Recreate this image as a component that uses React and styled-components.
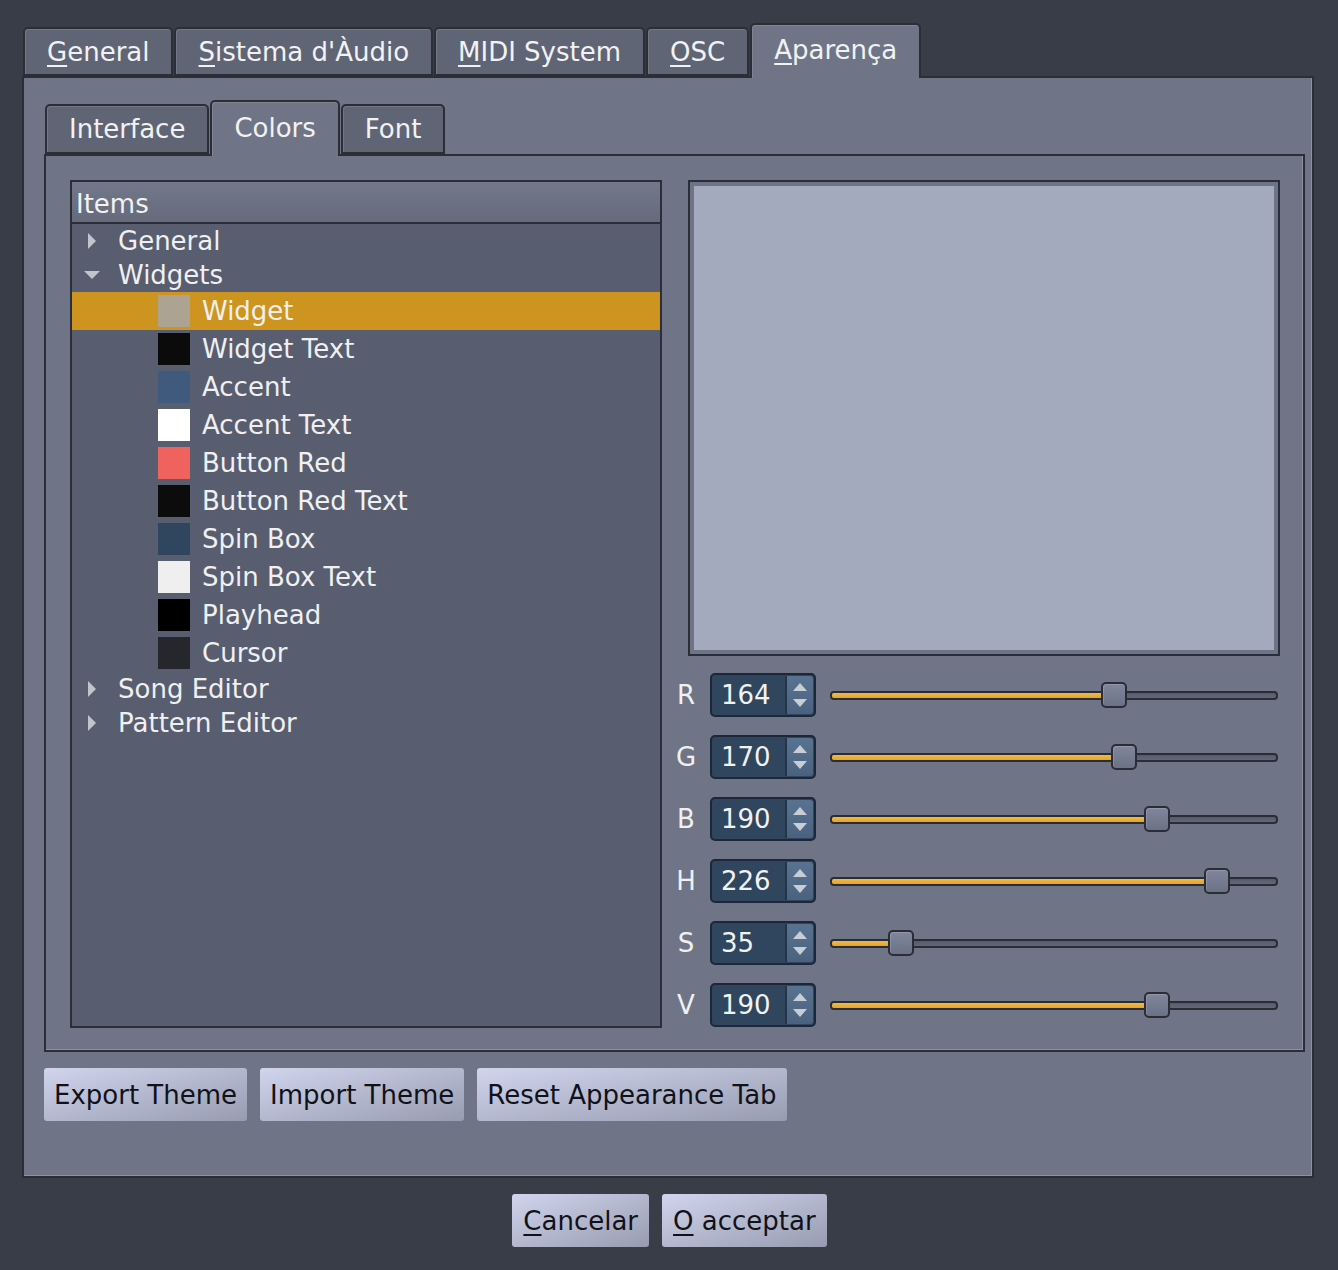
import React from 'react';
import styled, { createGlobalStyle } from 'styled-components';

const Global = createGlobalStyle`
  html, body { margin: 0; padding: 0; background: #393d48; }
  body {
    font-family: "DejaVu Sans", "Liberation Sans", sans-serif;
    font-size: 26px;
    color: #f0f0f0;
  }
  * { box-sizing: border-box; }
`;

const Dialog = styled.div`
  width: 1338px;
  height: 1270px;
  padding: 23px 24px 0 22px;
  display: flex;
  flex-direction: column;
`;

const TabBar = styled.div`
  display: flex;
  align-items: flex-end;
  gap: 1px;
  height: ${p => p.$h}px;
  padding-left: 1px;
  position: relative;
  z-index: 2;
  flex: none;
`;

const Tab = styled.div`
  height: ${p => p.$h}px;
  padding: 0 22px ${p => (p.$active ? 3 : 0)}px;
  display: flex;
  align-items: center;
  white-space: nowrap;
  color: #f2f2f2;
  background: ${p => (p.$active ? '#6f7586' : '#606576')};
  border: 2px solid #2b2e36;
  border-bottom: ${p => (p.$active ? 'none' : '2px solid #2b2e36')};
  border-radius: 5px 5px 0 0;
  margin-bottom: ${p => (p.$active ? -2 : 0)}px;
  box-shadow: inset 1px 1px 0 rgba(255, 255, 255, 0.12);
`;

const Mn = styled.span`
  text-decoration: underline;
  text-decoration-thickness: 2px;
  text-underline-offset: 4px;
`;

const Pane = styled.div`
  background: #6f7586;
  border: 2px solid #2b2e36;
  box-shadow: inset -1px -1px 0 #8c92a3;
  height: ${p => p.$h}px;
  padding: ${p => p.$pad};
  flex: none;
  display: flex;
  flex-direction: column;
`;

const ContentGrid = styled.div`
  display: grid;
  grid-template-columns: 592px 608px;
  column-gap: 10px;
  height: 100%;
`;

const Tree = styled.div`
  border: 2px solid #2b2e36;
  background: #585d70;
  display: flex;
  flex-direction: column;
  height: 848px;
`;

const TreeHeader = styled.div`
  height: 42px;
  flex: none;
  padding: 3px 0 0 4px;
  display: flex;
  align-items: center;
  background: linear-gradient(#727889, #656a7c);
  border-bottom: 2px solid #2b2e36;
  color: #f2f2f2;
`;

const Row = styled.div`
  height: ${p => (p.$child ? 38 : 34)}px;
  display: flex;
  align-items: center;
  padding-left: ${p => (p.$child ? 86 : 0)}px;
  background: ${p => (p.$selected ? '#cd951f' : 'transparent')};
  color: #f0f0f0;
  white-space: nowrap;
`;

const ArrowBox = styled.span`
  width: 40px;
  margin-right: 6px;
  display: flex;
  justify-content: center;
  align-items: center;
  flex: none;
`;

const Swatch = styled.span`
  width: 32px;
  height: 32px;
  flex: none;
  margin-right: 12px;
  background: ${p => p.$c};
`;

const RightCol = styled.div`
  display: flex;
  flex-direction: column;
`;

const Preview = styled.div`
  margin-left: 16px;
  height: 476px;
  border: 2px solid #2b2e36;
  padding: 4px;
  background: #6e7487;
  flex: none;
`;

const PreviewFill = styled.div`
  width: 100%;
  height: 100%;
  background: ${p => p.$c};
`;

const Sliders = styled.div`
  margin-top: 17px;
  display: flex;
  flex-direction: column;
  gap: 18px;
`;

const SliderRow = styled.div`
  height: 44px;
  display: flex;
  align-items: center;
`;

const ChanLabel = styled.span`
  width: 28px;
  text-align: center;
  color: #f0f0f0;
  flex: none;
`;

const Spin = styled.div`
  margin-left: 10px;
  width: 106px;
  height: 44px;
  flex: none;
  display: flex;
  background: #30455e;
  border: 2px solid #1d2737;
  border-radius: 5px;
  overflow: hidden;
`;

const SpinValue = styled.span`
  flex: 1;
  padding-left: 9px;
  display: flex;
  align-items: center;
  color: #f2f2f2;
`;

const SpinButtons = styled.div`
  width: 28px;
  flex: none;
  display: flex;
  flex-direction: column;
  justify-content: center;
  align-items: center;
  gap: 8px;
  border-left: 2px solid #26344a;
  background: linear-gradient(#587391, #4a6280);
  border-radius: 0 3px 3px 0;
  margin: 1px 1px 1px 0;
`;

const Slider = styled.div`
  position: relative;
  flex: 1;
  height: 26px;
  margin-left: 14px;
  margin-right: 2px;
  display: flex;
  align-items: center;
`;

const Groove = styled.div`
  position: relative;
  width: 100%;
  height: 9px;
  border: 2px solid #2a2d36;
  border-radius: 4px;
  background: linear-gradient(#565b6c, #62677a);
  overflow: hidden;
`;

const Fill = styled.div`
  height: 100%;
  background: linear-gradient(#f2bb3f, #e3a52b);
`;

const Handle = styled.div`
  position: absolute;
  top: 0;
  width: 26px;
  height: 26px;
  border: 2px solid #2a2d36;
  border-radius: 5px;
  background: linear-gradient(#80869b, #6c7286);
  box-shadow: inset 1px 1px 0 rgba(255, 255, 255, 0.15);
`;

const ButtonRow = styled.div`
  display: flex;
  gap: 13px;
  margin-top: 16px;
  padding-left: ${p => p.$pl || 0}px;
  justify-content: ${p => (p.$center ? 'center' : 'flex-start')};
  flex: none;
`;

const Button = styled.div`
  height: 53px;
  padding: 0 ${p => p.$px || 10}px;
  display: flex;
  align-items: center;
  white-space: nowrap;
  color: #111218;
  border-radius: 3px;
  background: linear-gradient(to bottom right, #d0d4ed, #979cb1);
`;

const RightArrow = () => (
  <svg width="9" height="16" viewBox="0 0 9 16">
    <polygon points="0,0 8,8 0,16" fill="#c1c4cc" />
  </svg>
);

const DownArrow = () => (
  <svg width="16" height="9" viewBox="0 0 16 9">
    <polygon points="0,0 16,0 8,8" fill="#c1c4cc" />
  </svg>
);

const SpinUp = () => (
  <svg width="14" height="8" viewBox="0 0 14 8">
    <polygon points="0,8 14,8 7,0" fill="#c9cdd6" />
  </svg>
);

const SpinDown = () => (
  <svg width="14" height="8" viewBox="0 0 14 8">
    <polygon points="0,0 14,0 7,8" fill="#c9cdd6" />
  </svg>
);

const children = [
  ['Widget', '#aca393', true],
  ['Widget Text', '#0b0b0b'],
  ['Accent', '#3f5a7c'],
  ['Accent Text', '#ffffff'],
  ['Button Red', '#f0625e'],
  ['Button Red Text', '#0c0c0c'],
  ['Spin Box', '#30455e'],
  ['Spin Box Text', '#efefef'],
  ['Playhead', '#000000'],
  ['Cursor', '#25272d'],
];

const channels = [
  ['R', 164],
  ['G', 170],
  ['B', 190],
  ['H', 226],
  ['S', 35],
  ['V', 190],
];

function ChannelSlider({ value }) {
  const f = value / 255;
  const pos = `calc((100% - 26px) * ${f})`;
  return (
    <Slider>
      <Groove>
        <Fill style={{ width: `calc(${pos} + 13px)` }} />
      </Groove>
      <Handle style={{ left: pos }} />
    </Slider>
  );
}

export default function App() {
  return (
    <>
      <Global />
      <Dialog>
        <TabBar $h={53}>
          <Tab $h={49}><span><Mn>G</Mn>eneral</span></Tab>
          <Tab $h={49}><span><Mn>S</Mn>istema d'Àudio</span></Tab>
          <Tab $h={49}><span><Mn>M</Mn>IDI System</span></Tab>
          <Tab $h={49}><span><Mn>O</Mn>SC</span></Tab>
          <Tab $h={55} $active><span><Mn>A</Mn>parença</span></Tab>
        </TabBar>
        <Pane $h={1102} $pad="22px 7px 0 20px">
          <TabBar $h={54}>
            <Tab $h={50}>Interface</Tab>
            <Tab $h={56} $active>Colors</Tab>
            <Tab $h={50}>Font</Tab>
          </TabBar>
          <Pane $h={898} $pad="24px 23px 22px 24px">
            <ContentGrid>
              <Tree>
                <TreeHeader>Items</TreeHeader>
                <Row>
                  <ArrowBox><RightArrow /></ArrowBox>General
                </Row>
                <Row>
                  <ArrowBox><DownArrow /></ArrowBox>Widgets
                </Row>
                {children.map(([name, c, sel]) => (
                  <Row key={name} $child $selected={sel}>
                    <Swatch $c={c} />
                    {name}
                  </Row>
                ))}
                <Row>
                  <ArrowBox><RightArrow /></ArrowBox>Song Editor
                </Row>
                <Row>
                  <ArrowBox><RightArrow /></ArrowBox>Pattern Editor
                </Row>
              </Tree>
              <RightCol>
                <Preview>
                  <PreviewFill $c="#a4aabe" />
                </Preview>
                <Sliders>
                  {channels.map(([l, v]) => (
                    <SliderRow key={l}>
                      <ChanLabel>{l}</ChanLabel>
                      <Spin>
                        <SpinValue>{v}</SpinValue>
                        <SpinButtons>
                          <SpinUp />
                          <SpinDown />
                        </SpinButtons>
                      </Spin>
                      <ChannelSlider value={v} />
                    </SliderRow>
                  ))}
                </Sliders>
              </RightCol>
            </ContentGrid>
          </Pane>
          <ButtonRow>
            <Button>Export Theme</Button>
            <Button>Import Theme</Button>
            <Button>Reset Appearance Tab</Button>
          </ButtonRow>
        </Pane>
        <ButtonRow $center $pl={3}>
          <Button $px={11}><span><Mn>C</Mn>ancelar</span></Button>
          <Button $px={11}><span><Mn>O</Mn> acceptar</span></Button>
        </ButtonRow>
      </Dialog>
    </>
  );
}
